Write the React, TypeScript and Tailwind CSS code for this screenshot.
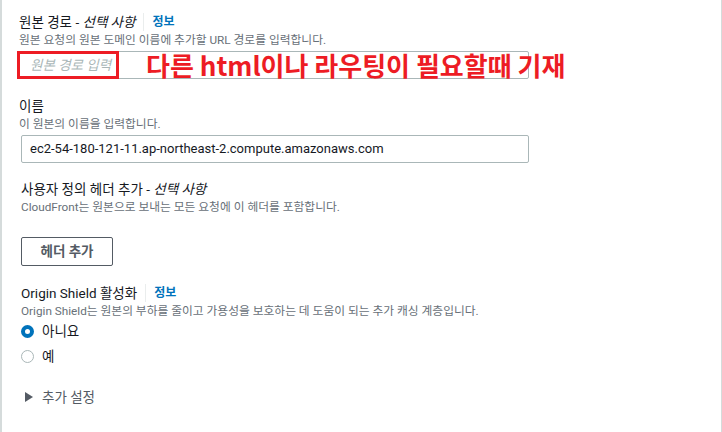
import React from 'react';

const font = { fontFamily: 'Roboto, "Noto Sans CJK KR", sans-serif' };

// Label with optional "- 선택 사항" and info link
const FieldLabel = ({ title, optional, info }: { title: string; optional?: boolean; info?: boolean }) => (
  <div className="flex items-center h-[20px] text-[13.5px] leading-[20px] text-[#16191f]">
    <span>
      {title}
      {optional && (
        <>
          {' - '}
          <i>선택 사항</i>
        </>
      )}
    </span>
    {info && (
      <>
        <span className="mx-[8px] h-[18px] w-px bg-[#eaeded]" />
        <span className="text-[12px] font-bold text-[#0073bb]">정보</span>
      </>
    )}
  </div>
);

const Desc = ({ children }: { children: React.ReactNode }) => (
  <div className="text-[11.75px] leading-[16px] text-[#687078]">{children}</div>
);

export default function App() {
  return (
    <div
      className="w-[722px] h-[432px] bg-white border-l-2 border-r border-l-[#d5dbdb] border-r-[#d5dbdb] overflow-hidden"
      style={font}
    >
      <div className="pl-[17px] pt-[12px]">
        {/* 원본 경로 */}
        <FieldLabel title="원본 경로" optional info />
        <Desc>원본 요청의 원본 도메인 이름에 추가할 URL 경로를 입력합니다.</Desc>
        <div className="relative mt-[3px] w-[510px]">
          <div className="h-[28px] border border-[#aab7b8] rounded-[2px] flex items-center pl-[10px] text-[13.5px] italic text-[#aab7b8]">
            원본 경로 입력
          </div>
          <div className="absolute left-[-2px] top-0 w-[102px] h-[28px] border-[3px] border-[#ed1c24]" />
          <div
            className="absolute left-[127px] top-[-3px] text-[26px] leading-[34px] font-bold text-[#ed1c24] whitespace-nowrap"
            style={{ fontFamily: '"Noto Sans CJK KR", sans-serif' }}
          >
            다른 html이나 라우팅이 필요할때 기재
          </div>
        </div>

        {/* 이름 */}
        <div className="mt-[17px]">
          <FieldLabel title="이름" />
          <Desc>이 원본의 이름을 입력합니다.</Desc>
          <div className="mt-[3px] w-[508px] ml-[2px] h-[28px] border border-[#aab7b8] rounded-[2px] flex items-center pl-[8px] text-[13px] text-[#16191f]">
            ec2-54-180-121-11.ap-northeast-2.compute.amazonaws.com
          </div>
        </div>

        {/* 사용자 정의 헤더 */}
        <div className="mt-[16px] ml-[2px]">
          <FieldLabel title="사용자 정의 헤더 추가" optional />
          <Desc>CloudFront는 원본으로 보내는 모든 요청에 이 헤더를 포함합니다.</Desc>
          <button className="mt-[22px] w-[92px] h-[29px] border border-[#545b64] rounded-[2px] text-[13.5px] font-bold text-[#545b64] flex items-center justify-center">
            헤더 추가
          </button>
        </div>

        {/* Origin Shield */}
        <div className="mt-[17px] ml-[2px]">
          <FieldLabel title="Origin Shield 활성화" info />
          <Desc>Origin Shield는 원본의 부하를 줄이고 가용성을 보호하는 데 도움이 되는 추가 캐싱 계층입니다.</Desc>
          <div className="mt-[2px] flex items-center gap-[8px] h-[20px] text-[13.5px] text-[#16191f]">
            <span className="w-[13px] h-[13px] rounded-full border-[4px] border-[#0073bb] bg-white" />
            <span>아니요</span>
          </div>
          <div className="mt-[5px] flex items-center gap-[8px] h-[20px] text-[13.5px] text-[#16191f]">
            <span className="w-[13px] h-[13px] rounded-full border border-[#aab7b8] bg-white" />
            <span>예</span>
          </div>
          <div className="mt-[21px] flex items-center h-[20px] text-[13.5px] text-[#545b64]">
            <svg width="8" height="10" viewBox="0 0 8 10" className="ml-[4px] mr-[9px]">
              <path d="M0 0 L8 5 L0 10 Z" fill="#545b64" />
            </svg>
            <span>추가 설정</span>
          </div>
        </div>
      </div>
    </div>
  );
}
